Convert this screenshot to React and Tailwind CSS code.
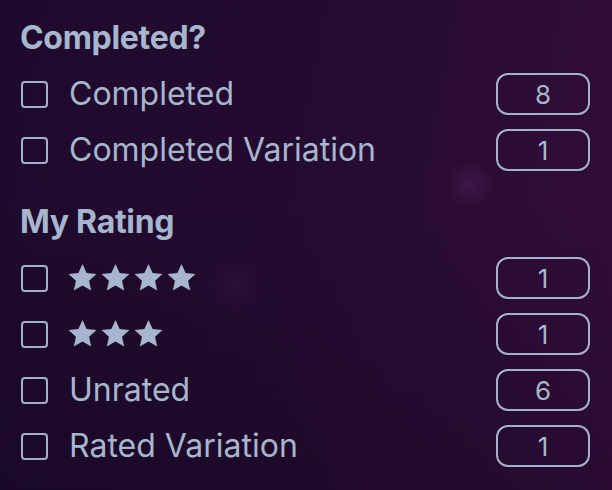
import React from "react";

const COMPLETED = [
  { label: "Completed", count: 8 },
  { label: "Completed Variation", count: 1 },
];

const RATING = [
  { stars: 4, count: 1 },
  { stars: 3, count: 1 },
  { label: "Unrated", count: 6 },
  { label: "Rated Variation", count: 1 },
];

function Star() {
  return (
    <svg viewBox="0 0 24 24" className="w-[31px] h-[31px] shrink-0" fill="currentColor">
      <polygon points="12,1.5 15.2,8.5 22.8,9.3 17.1,14.5 18.7,22 12,18.2 5.3,22 6.9,14.5 1.2,9.3 8.8,8.5" />
    </svg>
  );
}

function Row({ label, stars, count }) {
  return (
    <div className="flex items-center h-14">
      <div className="w-[27px] h-[27px] ml-px rounded-[4px] border-2 border-[#a3b2c8] shrink-0" />
      <div className="flex-1 ml-[21px] flex items-center">
        {stars ? (
          <div className="flex items-center gap-[2px] -ml-[2px] -mt-[2px]">
            {Array.from({ length: stars }).map((_, i) => (
              <Star key={i} />
            ))}
          </div>
        ) : (
          <span className="text-[32px] leading-none">{label}</span>
        )}
      </div>
      <div className="w-[94px] h-[42px] rounded-[12px] border-2 border-[#a3b2c8] flex items-center justify-center text-[26px]">
        {count}
      </div>
    </div>
  );
}

export default function App() {
  return (
    <div
      className="w-[612px] h-[490px] overflow-hidden relative text-[#a7b6cc] bg-[linear-gradient(100deg,#1e0a2c_0%,#230b30_45%,#330d3a_100%)]"
      style={{ fontFamily: "Inter, 'Noto Sans', sans-serif" }}
    >
      <div className="absolute inset-0 bg-[radial-gradient(circle_at_470px_185px,rgba(120,60,130,0.25)_0,transparent_25px),radial-gradient(circle_at_235px_285px,rgba(120,60,130,0.12)_0,transparent_30px),linear-gradient(180deg,transparent_40%,rgba(10,4,20,0.25)_100%)]" />
      <div className="relative pl-5 pr-[22px] pt-[22px]">
        <h2 className="h-8 flex items-center text-[32px] font-bold tracking-[-0.3px]">Completed?</h2>
        <div className="mt-3">
          {COMPLETED.map((r) => (
            <Row key={r.label} {...r} />
          ))}
        </div>
        <h2 className="mt-7 h-8 flex items-center text-[32px] font-bold tracking-[-0.3px]">My Rating</h2>
        <div className="mt-3">
          {RATING.map((r, i) => (
            <Row key={i} {...r} />
          ))}
        </div>
      </div>
    </div>
  );
}
